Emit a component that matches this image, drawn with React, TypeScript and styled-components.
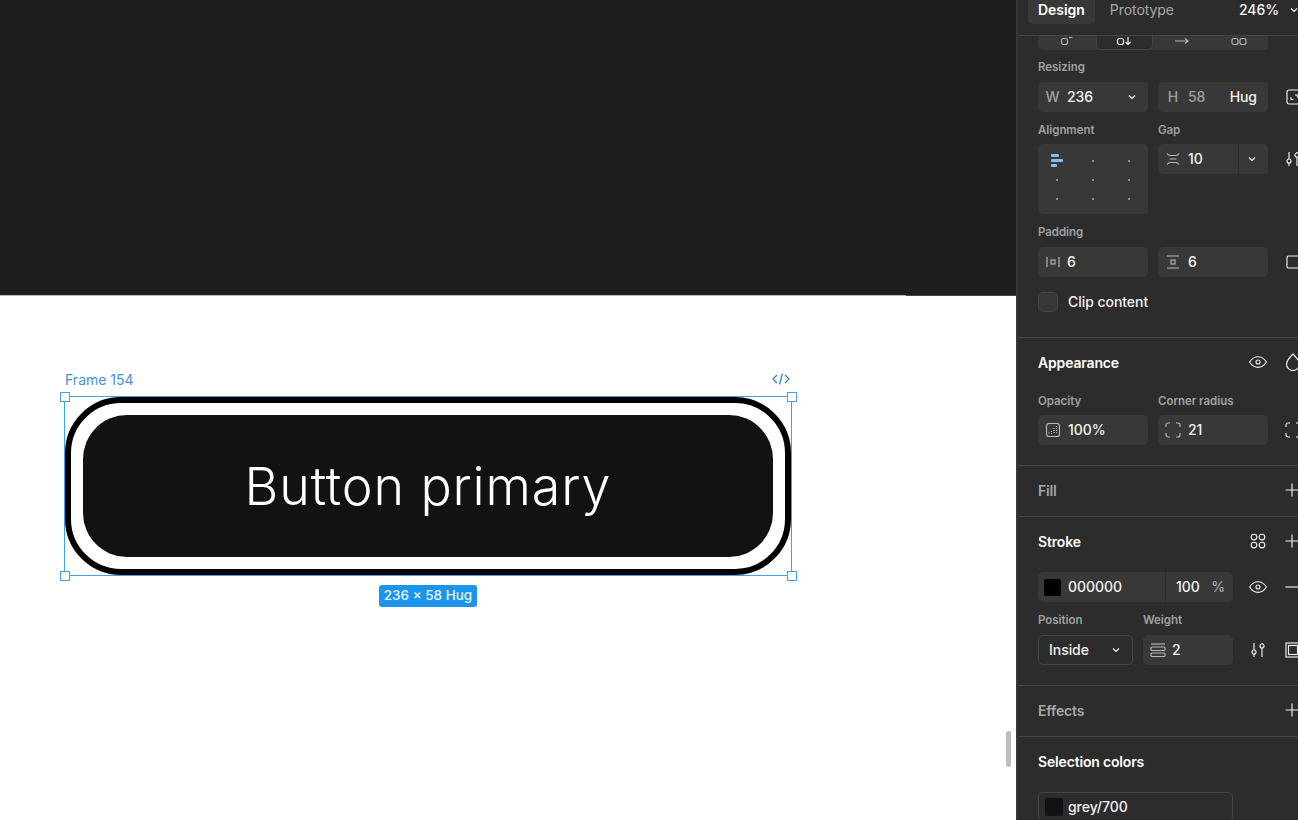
import React from 'react';
import styled, { createGlobalStyle } from 'styled-components';

const GlobalStyle = createGlobalStyle`
  html, body {
    margin: 0;
    padding: 0;
    background: #ffffff;
    overflow: hidden;
  }
  * {
    box-sizing: border-box;
  }
`;

const Page = styled.div`
  display: flex;
  width: 1298px;
  height: 820px;
  overflow: hidden;
  font-family: 'Inter', 'Liberation Sans', sans-serif;
`;

const Canvas = styled.div`
  position: relative;
  display: flex;
  flex-direction: column;
  width: 1016px;
  height: 820px;
  flex-shrink: 0;
`;

const DarkArea = styled.div`
  height: 295px;
  background: #1e1e1e;
`;

const Seam = styled.div`
  display: flex;
  height: 1px;
  background: #444444;
`;

const SeamLight = styled.div`
  width: 906px;
  background: #b8b8b8;
`;

const Stage = styled.div`
  position: relative;
  flex: 1;
  background: #ffffff;
`;

const FrameName = styled.div`
  position: absolute;
  left: 65px;
  top: 76px;
  font-size: 14px;
  line-height: 16px;
  color: #4a90d4;
`;

const CodeMark = styled.svg`
  position: absolute;
  left: 772px;
  top: 76px;
  color: #2f7cc4;
`;

const Selection = styled.div`
  position: absolute;
  left: 64px;
  top: 100px;
  width: 728px;
  height: 180px;
  border: 1.5px solid #45a0e6;
`;

const Handle = styled.div<{ $x: 'l' | 'r'; $y: 't' | 'b' }>`
  position: absolute;
  width: 10px;
  height: 10px;
  background: #ffffff;
  border: 1.5px solid #45a0e6;
  ${(p) => (p.$x === 'l' ? 'left: -5.5px;' : 'right: -5.5px;')}
  ${(p) => (p.$y === 't' ? 'top: -5.5px;' : 'bottom: -5.5px;')}
`;

const ButtonOuter = styled.div`
  position: absolute;
  left: 65px;
  top: 101px;
  width: 726px;
  height: 178px;
  padding: 12px;
  border: 6px solid #000000;
  border-radius: 56px;
  background: #ffffff;
`;

const ButtonInner = styled.div`
  display: flex;
  align-items: center;
  justify-content: center;
  width: 100%;
  height: 100%;
  border-radius: 44px;
  background: #111214;
  color: #ffffff;
  font-size: 52px;
  font-weight: 350;
  letter-spacing: 0.85px;
`;

const SizeBadge = styled.div`
  position: absolute;
  left: 379px;
  top: 289px;
  width: 98px;
  height: 22px;
  border-radius: 3px;
  background: #1b95ec;
  color: #e8f5ff;
  font-size: 13.5px;
  line-height: 21px;
  font-weight: 500;
  text-align: center;
  white-space: nowrap;
`;

const Scrollbar = styled.div`
  position: absolute;
  left: 1006px;
  top: 435px;
  width: 5px;
  height: 36px;
  border-radius: 3px;
  background: #bdbdbd;
`;

const Panel = styled.aside`
  flex: 1;
  height: 820px;
  overflow: hidden;
  border-left: 2px solid #383838;
  background: #2c2c2c;
  color: #f2f2f2;
  font-size: 14px;
  font-weight: 500;
  letter-spacing: -0.05px;
`;

const Header = styled.header`
  display: flex;
  align-items: flex-start;
  width: 300px;
  height: 36px;
  padding-left: 10px;
  border-bottom: 1px solid #444444;
`;

const Tab = styled.div<{ $active?: boolean }>`
  height: 24px;
  padding: 0 10px;
  margin-right: ${(p) => (p.$active ? '5px' : '0')};
  border-radius: 0 0 5px 5px;
  background: ${(p) => (p.$active ? '#383838' : 'transparent')};
  color: ${(p) => (p.$active ? '#ffffff' : '#a8a8a8')};
  font-weight: ${(p) => (p.$active ? 600 : 400)};
  line-height: 20px;
`;

const Zoom = styled.div`
  margin-left: 55px;
  line-height: 20px;
  display: flex;
  align-items: center;
  gap: 11px;
`;

const Strip = styled.div`
  display: grid;
  grid-template-columns: repeat(4, 1fr);
  width: 230px;
  height: 14px;
  margin-left: 20px;
  border-radius: 0 0 5px 5px;
  background: #383838;
  color: #b5b5b5;
`;

const StripCell = styled.div<{ $active?: boolean }>`
  display: flex;
  justify-content: center;
  height: 14px;
  overflow: hidden;
  color: ${(p) => (p.$active ? '#f0f0f0' : '#b5b5b5')};
  background: ${(p) => (p.$active ? '#2c2c2c' : 'transparent')};
  border: ${(p) => (p.$active ? '1px solid #444444' : 'none')};
  border-top: none;
  border-radius: 0 0 5px 5px;
`;

const Section = styled.section<{ $pad?: number }>`
  width: 280px;
  padding: 0 0 ${(p) => p.$pad ?? 0}px 20px;
  border-bottom: 1px solid #444444;
`;

const OpenBlock = styled.div`
  padding: 9px 0 25px 20px;
  border-bottom: 1px solid #444444;
`;

const LastBlock = styled.div`
  padding-left: 20px;
`;

const Label = styled.div<{ $gap?: number }>`
  height: 16px;
  margin-bottom: ${(p) => p.$gap ?? 7}px;
  font-size: 11.5px;
  line-height: 16px;
  font-weight: 600;
  color: #a0a0a0;
  white-space: nowrap;
`;

const Row = styled.div<{ $top?: number }>`
  display: flex;
  align-items: flex-start;
  gap: 10px;
  width: 300px;
  margin-top: ${(p) => p.$top ?? 0}px;
`;

const Column = styled.div<{ $w: number }>`
  width: ${(p) => p.$w}px;
  flex-shrink: 0;
`;

const Field = styled.div<{ $w?: number }>`
  display: flex;
  align-items: center;
  flex-shrink: 0;
  width: ${(p) => p.$w ?? 110}px;
  height: 30px;
  border-radius: 5px;
  background: #383838;
`;

const OutlineField = styled(Field)`
  background: transparent;
  border: 1px solid #444444;
`;

const Prefix = styled.div<{ $w?: number }>`
  display: flex;
  align-items: center;
  justify-content: center;
  flex-shrink: 0;
  width: ${(p) => p.$w ?? 29}px;
  height: 30px;
  color: #b8b8b8;
`;

const Value = styled.span<{ $muted?: boolean }>`
  margin-bottom: 2px;
  color: ${(p) => (p.$muted ? '#a0a0a0' : '#f2f2f2')};
`;

const Push = styled.div<{ $right?: number }>`
  display: flex;
  align-items: center;
  margin-left: auto;
  padding-right: ${(p) => p.$right ?? 12}px;
  color: #f2f2f2;
`;

const Split = styled.div`
  display: flex;
  align-items: center;
  justify-content: center;
  width: 30px;
  height: 30px;
  margin-left: auto;
  padding-right: 3px;
  border-left: 1px solid #2c2c2c;
  color: #f2f2f2;
`;

const Slot = styled.div<{ $left?: number }>`
  display: flex;
  align-items: center;
  justify-content: center;
  flex-shrink: 0;
  width: 20px;
  height: 30px;
  margin-left: ${(p) => p.$left ?? 0}px;
  color: #f0f0f0;
`;

const AlignGrid = styled.div`
  display: grid;
  grid-template-columns: repeat(3, 36px);
  grid-auto-rows: 19px;
  width: 110px;
  height: 70px;
  padding: 7px 1px 0;
  border-radius: 5px;
  background: #383838;
`;

const AlignCell = styled.div`
  display: flex;
  align-items: center;
  justify-content: center;
`;

const Dot = styled.i`
  display: block;
  width: 2px;
  height: 2px;
  background: #8f8f8f;
`;

const Bars = styled.div`
  display: flex;
  flex-direction: column;
  align-items: flex-start;
  gap: 2px;
  width: 12px;
`;

const Bar = styled.i<{ $w: number }>`
  display: block;
  height: 3px;
  width: ${(p) => p.$w}px;
  border-radius: 1px;
  background: #7cc4f8;
`;

const CheckRow = styled.div`
  display: flex;
  align-items: center;
  gap: 10px;
  margin-top: 15px;
  height: 20px;
`;

const Checkbox = styled.div`
  width: 20px;
  height: 20px;
  border-radius: 5px;
  background: #383838;
  border: 1px solid #444444;
`;

const Head = styled.div<{ $dim?: boolean }>`
  display: flex;
  align-items: center;
  width: 300px;
  height: 50px;
  padding-bottom: 2px;
  font-weight: 600;
  letter-spacing: -0.17px;
  color: ${(p) => (p.$dim ? '#a8a8a8' : '#ffffff')};
`;

const HeadTitle = styled.div`
  flex: 0 0 210px;
`;

const Swatch = styled.div<{ $color: string; $size: number; $right: number }>`
  flex-shrink: 0;
  width: ${(p) => p.$size}px;
  height: ${(p) => p.$size}px;
  margin: 0 ${(p) => p.$right}px 0 6px;
  border-radius: 2px;
  background: ${(p) => p.$color};
`;

const Percent = styled.div`
  display: flex;
  align-items: center;
  height: 30px;
  width: 68px;
  margin-left: auto;
  padding-left: 10px;
  border-left: 1px solid #2c2c2c;
`;

const PercentSign = styled.span`
  margin-left: auto;
  margin-bottom: 2px;
  padding-right: 8px;
  color: #a8a8a8;
`;

const SelectText = styled.span`
  margin-left: 10px;
  margin-bottom: 2px;
`;

const Icon = styled.svg`
  display: block;
  flex-shrink: 0;
  fill: none;
  stroke: currentColor;
  stroke-width: 1.15;
`;

const Chevron = () => (
  <Icon width="8" height="6" viewBox="0 0 8 6">
    <path d="M1 1.5 L4 4.5 L7 1.5" />
  </Icon>
);

const Plus = () => (
  <Icon width="14" height="14" viewBox="0 0 14 14">
    <path d="M7 .5v13M.5 7h13" />
  </Icon>
);

const Eye = () => (
  <Icon width="18" height="12" viewBox="0 0 18 12">
    <path d="M.6 6C2.600 2.800 5.700.7 9 .7s6.400 2.100 8.400 5.300c-2 3.200-5.100 5.300-8.400 5.300S2.600 9.200.6 6z" />
    <circle cx="9" cy="6" r="2" />
  </Icon>
);

const Tune = () => (
  <Icon width="16" height="16" viewBox="0 0 16 16">
    <path d="M4 1v7M4 12v3M12 1v1M12 6v9" />
    <circle cx="4" cy="10" r="2" />
    <circle cx="12" cy="4" r="2" />
  </Icon>
);

const Corners = () => (
  <Icon width="16" height="16" viewBox="0 0 16 16">
    <path d="M1 5V3a2 2 0 0 1 2-2h2M11 1h2a2 2 0 0 1 2 2v2M15 11v2a2 2 0 0 1-2 2h-2M5 15H3a2 2 0 0 1-2-2v-2" />
  </Icon>
);

export default function App() {
  return (
    <Page>
      <GlobalStyle />
      <Canvas>
        <DarkArea />
        <Seam>
          <SeamLight />
        </Seam>
        <Stage>
          <FrameName>Frame 154</FrameName>
          <CodeMark width="18" height="14" viewBox="0 0 18 14" fill="none" stroke="currentColor" strokeWidth="1.2">
            <path d="M5 3 L1 7 L5 11M13 3 L17 7 L13 11M10.5 1.5 L7.5 12.5" />
          </CodeMark>
          <ButtonOuter>
            <ButtonInner>Button primary</ButtonInner>
          </ButtonOuter>
          <Selection>
            <Handle $x="l" $y="t" />
            <Handle $x="r" $y="t" />
            <Handle $x="l" $y="b" />
            <Handle $x="r" $y="b" />
          </Selection>
          <SizeBadge>236 × 58 Hug</SizeBadge>
          <Scrollbar />
        </Stage>
      </Canvas>

      <Panel>
        <Header>
          <Tab $active>Design</Tab>
          <Tab>Prototype</Tab>
          <Zoom>
            246%
            <Chevron />
          </Zoom>
        </Header>

        <Strip>
          <StripCell>
            <Icon width="14" height="10" viewBox="0 0 14 10">
              <rect x="1.5" y="2.5" width="6" height="6" rx="2" />
              <path d="M9 1.5h3.5" />
            </Icon>
          </StripCell>
          <StripCell $active>
            <Icon width="16" height="10" viewBox="0 0 16 10">
              <rect x="1.5" y="2.5" width="6" height="6" rx="2" />
              <path d="M12 1v7M9.500 6 12 8.500 14.500 6" />
            </Icon>
          </StripCell>
          <StripCell>
            <Icon width="16" height="10" viewBox="0 0 16 10">
              <path d="M1 5h13M11 2.500 14 5l-3 2.500" />
            </Icon>
          </StripCell>
          <StripCell>
            <Icon width="16" height="10" viewBox="0 0 16 10">
              <rect x="1" y="2.500" width="6" height="6" rx="2" />
              <rect x="9" y="2.500" width="6" height="6" rx="2" />
            </Icon>
          </StripCell>
        </Strip>

        <OpenBlock>
          <Label>Resizing</Label>
          <Row>
            <Field>
              <Prefix>
                <Value $muted>W</Value>
              </Prefix>
              <Value>236</Value>
              <Push>
                <Chevron />
              </Push>
            </Field>
            <Field>
              <Prefix $w={30}>
                <Value $muted>H</Value>
              </Prefix>
              <Value $muted>58</Value>
              <Push $right={11}>
                <Value>Hug</Value>
              </Push>
            </Field>
            <Slot $left={6}>
              <Icon width="16" height="16" viewBox="0 0 16 16">
                <rect x="1" y="1" width="14" height="14" rx="2" />
                <path d="M9 6h2.500v2.500M5 8v2.500h2.500" />
              </Icon>
            </Slot>
          </Row>

          <Row $top={10}>
            <Column $w={110}>
              <Label $gap={6}>Alignment</Label>
              <AlignGrid>
                <AlignCell>
                  <Bars>
                    <Bar $w={8} />
                    <Bar $w={12} />
                    <Bar $w={6} />
                  </Bars>
                </AlignCell>
                {Array.from({ length: 8 }, (_, i) => (
                  <AlignCell key={i}>
                    <Dot />
                  </AlignCell>
                ))}
              </AlignGrid>
            </Column>
            <Column $w={110}>
              <Label $gap={6}>Gap</Label>
              <Field>
                <Prefix $w={30}>
                  <Icon width="14" height="14" viewBox="0 0 14 14">
                    <path d="M1 1.500c1 1.500 2 2 3 2h6c1 0 2-.5 3-2M1 12.500c1-1.500 2-2 3-2h6c1 0 2 .5 3 2M3.500 7h7" />
                  </Icon>
                </Prefix>
                <Value>10</Value>
                <Split>
                  <Chevron />
                </Split>
              </Field>
            </Column>
            <Column $w={20}>
              <Label $gap={6}>&nbsp;</Label>
              <Slot $left={5}>
                <Tune />
              </Slot>
            </Column>
          </Row>

          <Row $top={10}>
            <Column $w={110}>
              <Label>Padding</Label>
              <Field>
                <Prefix>
                  <Icon width="14" height="14" viewBox="0 0 14 14">
                    <path d="M1 2v10M13 2v10" />
                    <rect x="5" y="5" width="4" height="4" />
                  </Icon>
                </Prefix>
                <Value>6</Value>
              </Field>
            </Column>
            <Column $w={110}>
              <Label>&nbsp;</Label>
              <Field>
                <Prefix $w={30}>
                  <Icon width="14" height="14" viewBox="0 0 14 14">
                    <path d="M1 1h12M1 13h12" />
                    <rect x="5" y="5" width="4" height="4" />
                  </Icon>
                </Prefix>
                <Value>6</Value>
              </Field>
            </Column>
            <Column $w={20}>
              <Label>&nbsp;</Label>
              <Slot $left={6}>
                <Icon width="16" height="14" viewBox="0 0 16 14">
                  <path d="M3 1H2.500A1.500 1.500 0 0 0 1 2.500v9A1.500 1.500 0 0 0 2.500 13H3M3 1h10M3 13h10" />
                </Icon>
              </Slot>
            </Column>
          </Row>

          <CheckRow>
            <Checkbox />
            <Value>Clip content</Value>
          </CheckRow>
        </OpenBlock>

        <Section $pad={20}>
          <Head>
            <HeadTitle>Appearance</HeadTitle>
            <Slot>
              <Eye />
            </Slot>
            <Slot $left={15}>
              <Icon width="16" height="18" viewBox="0 0 16 18">
                <path d="M8 1c4 4 6.500 7 6.500 10a6.500 6.500 0 0 1-13 0C1.500 8 4 5 8 1z" />
              </Icon>
            </Slot>
          </Head>
          <Row $top={5}>
            <Column $w={110}>
              <Label $gap={6}>Opacity</Label>
              <Field>
                <Prefix $w={30}>
                  <Icon width="14" height="14" viewBox="0 0 14 14">
                    <rect x=".5" y=".5" width="13" height="13" rx="2.500" />
                    <path d="M10.500 3v8M8 5v6M5.500 8v3M3 9.500V11" strokeDasharray="1 1" />
                  </Icon>
                </Prefix>
                <Value>100%</Value>
              </Field>
            </Column>
            <Column $w={110}>
              <Label $gap={6}>Corner radius</Label>
              <Field>
                <Prefix $w={30}>
                  <Corners />
                </Prefix>
                <Value>21</Value>
              </Field>
            </Column>
            <Column $w={20}>
              <Label $gap={6}>&nbsp;</Label>
              <Slot $left={5}>
                <Corners />
              </Slot>
            </Column>
          </Row>
        </Section>

        <Section>
          <Head $dim>
            <HeadTitle>Fill</HeadTitle>
            <Slot />
            <Slot $left={14}>
              <Plus />
            </Slot>
          </Head>
        </Section>

        <Section $pad={20}>
          <Head>
            <HeadTitle>Stroke</HeadTitle>
            <Slot>
              <Icon width="16" height="16" viewBox="0 0 16 16">
                <circle cx="4" cy="4" r="2.800" />
                <circle cx="12" cy="4" r="2.800" />
                <circle cx="4" cy="12" r="2.800" />
                <circle cx="12" cy="12" r="2.800" />
              </Icon>
            </Slot>
            <Slot $left={14}>
              <Plus />
            </Slot>
          </Head>
          <Row $top={5}>
            <Field $w={195}>
              <Swatch $color="#000000" $size={17} $right={7} />
              <Value>000000</Value>
              <Percent>
                <Value>100</Value>
                <PercentSign>%</PercentSign>
              </Percent>
            </Field>
            <Slot $left={5}>
              <Eye />
            </Slot>
            <Slot $left={4}>
              <Icon width="14" height="14" viewBox="0 0 14 14">
                <path d="M.5 7h13" />
              </Icon>
            </Slot>
          </Row>
          <Row $top={10}>
            <Column $w={95}>
              <Label>Position</Label>
              <OutlineField $w={95}>
                <SelectText>Inside</SelectText>
                <Push>
                  <Chevron />
                </Push>
              </OutlineField>
            </Column>
            <Column $w={90}>
              <Label>Weight</Label>
              <Field $w={90}>
                <Prefix>
                  <Icon width="16" height="16" viewBox="0 0 16 16">
                    <path d="M1 2h14" />
                    <rect x="1" y="5" width="14" height="3.500" rx="1" />
                    <rect x="1" y="11" width="14" height="3.500" rx="1" />
                  </Icon>
                </Prefix>
                <Value>2</Value>
              </Field>
            </Column>
            <Column $w={20}>
              <Label>&nbsp;</Label>
              <Slot $left={5}>
                <Tune />
              </Slot>
            </Column>
            <Column $w={20}>
              <Label>&nbsp;</Label>
              <Slot $left={10}>
                <Icon width="16" height="16" viewBox="0 0 16 16">
                  <rect x="1" y="1" width="14" height="14" />
                  <rect x="3.500" y="3.500" width="9" height="9" />
                </Icon>
              </Slot>
            </Column>
          </Row>
        </Section>

        <Section>
          <Head $dim>
            <HeadTitle>Effects</HeadTitle>
            <Slot />
            <Slot $left={14}>
              <Plus />
            </Slot>
          </Head>
        </Section>

        <LastBlock>
          <Head>
            <HeadTitle>Selection colors</HeadTitle>
          </Head>
          <Row $top={5}>
            <OutlineField $w={195}>
              <Swatch $color="#111214" $size={18} $right={5} />
              <Value>grey/700</Value>
            </OutlineField>
          </Row>
        </LastBlock>
      </Panel>
    </Page>
  );
}
